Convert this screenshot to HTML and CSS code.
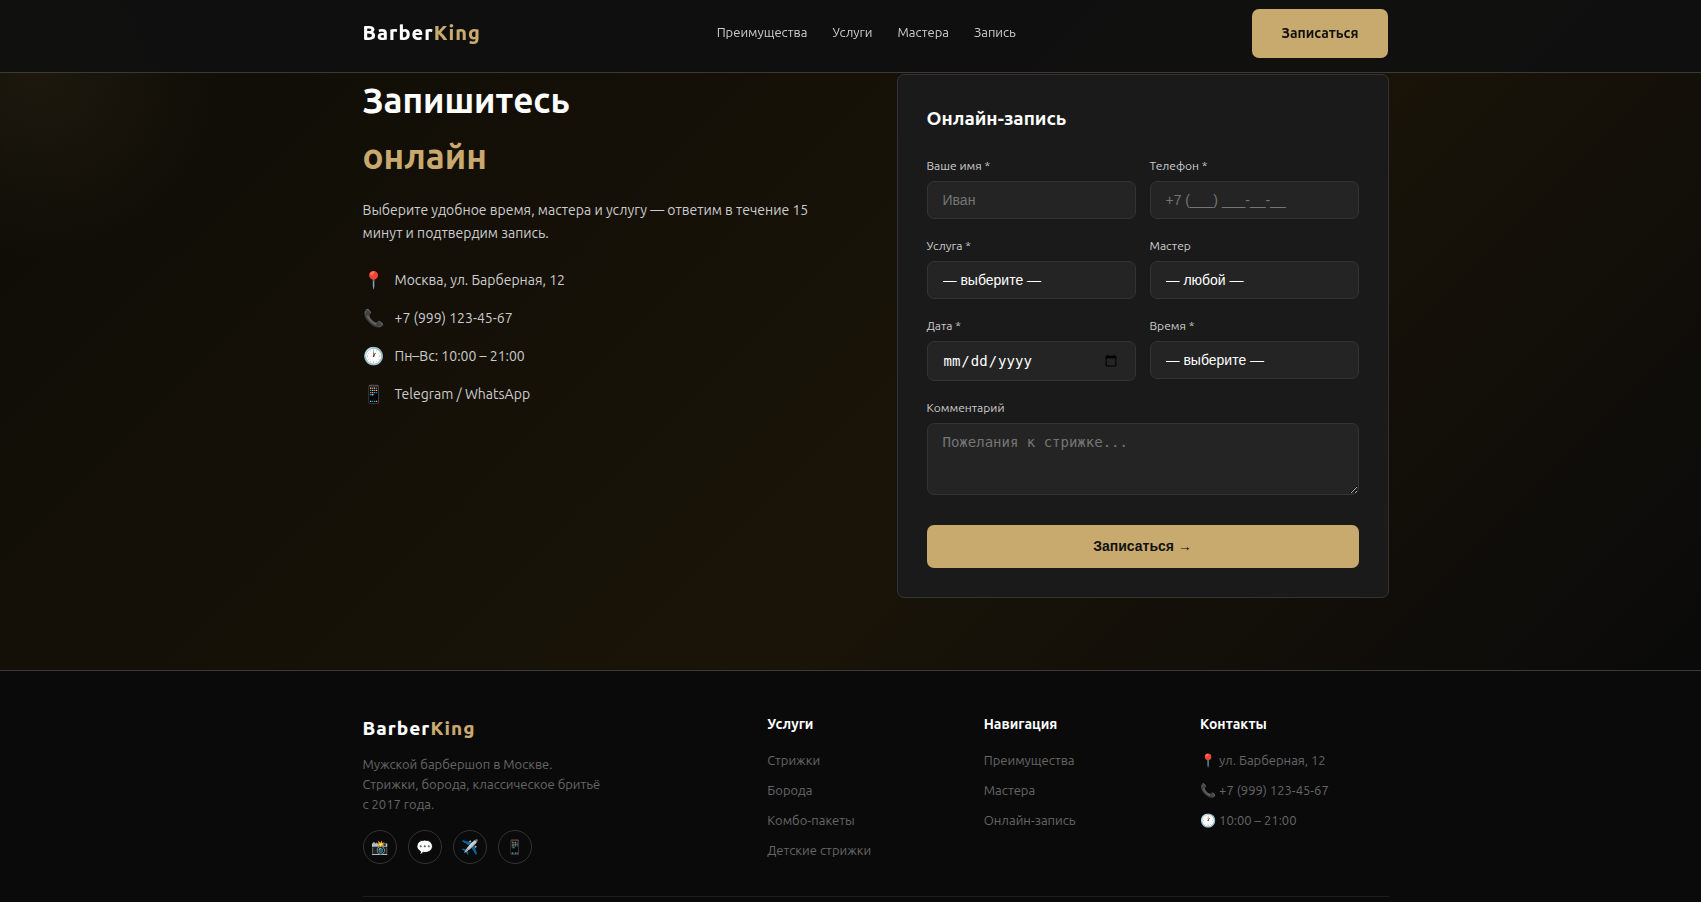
FILE: index.html
```html
<!DOCTYPE html>
<html lang="ru">
<head>
    <meta charset="UTF-8">
    <meta name="viewport" content="width=device-width, initial-scale=1.0">
    <title>BarberKing — онлайн-запись</title>
    <link rel="stylesheet" href="styles.css">
</head>
<body>

<header class="header">
    <div class="container header-inner">
        <a href="#" class="logo">Barber<span>King</span></a>
        <nav class="nav">
            <a href="#features">Преимущества</a>
            <a href="#services">Услуги</a>
            <a href="#masters">Мастера</a>
            <a href="#booking">Запись</a>
        </nav>
        <a href="#booking" class="btn btn-header">Записаться</a>
    </div>
</header>

<section class="booking" id="booking">
    <div class="container booking-grid">
        <div class="booking-info">
            <h2>Запишитесь<br><span>онлайн</span></h2>
            <p>Выберите удобное время, мастера и услугу — ответим в течение 15 минут и подтвердим запись.</p>
            <ul class="contacts">
                <li><span class="icon">📍</span>Москва, ул. Барберная, 12</li>
                <li><span class="icon">📞</span>+7 (999) 123-45-67</li>
                <li><span class="icon">🕐</span>Пн–Вс: 10:00 – 21:00</li>
                <li><span class="icon">📱</span>Telegram / WhatsApp</li>
            </ul>
        </div>

        <form class="card" id="bookingForm">
            <h3>Онлайн-запись</h3>
            <div class="form-grid">
                <div class="field">
                    <label for="name">Ваше имя *</label>
                    <input type="text" id="name" placeholder="Иван" required>
                </div>
                <div class="field">
                    <label for="phone">Телефон *</label>
                    <input type="tel" id="phone" placeholder="+7 (___) ___-__-__" required>
                </div>
                <div class="field">
                    <label for="service">Услуга *</label>
                    <select id="service" required>
                        <option value="">— выберите —</option>
                        <option>Стрижка</option>
                        <option>Борода</option>
                    </select>
                </div>
                <div class="field">
                    <label for="master">Мастер</label>
                    <select id="master">
                        <option value="">— любой —</option>
                    </select>
                </div>
                <div class="field">
                    <label for="date">Дата *</label>
                    <input type="date" id="date" required>
                </div>
                <div class="field">
                    <label for="time">Время *</label>
                    <select id="time" required>
                        <option value="">— выберите —</option>
                        <option>10:00</option>
                        <option>11:00</option>
                    </select>
                </div>
                <div class="field field-wide">
                    <label for="comment">Комментарий</label>
                    <textarea id="comment" placeholder="Пожелания к стрижке..."></textarea>
                </div>
            </div>
            <button type="submit" class="btn btn-submit">Записаться →</button>
        </form>
    </div>
</section>

<footer class="footer">
    <div class="container">
        <div class="footer-grid">
            <div>
                <a href="#" class="logo logo-footer">Barber<span>King</span></a>
                <p>Мужской барбершоп в Москве.<br>Стрижки, борода, классическое бритьё<br>с 2017 года.</p>
                <div class="socials">
                    <a href="#" aria-label="Instagram">📸</a>
                    <a href="#" aria-label="WhatsApp">💬</a>
                    <a href="#" aria-label="Telegram">✈️</a>
                    <a href="#" aria-label="Телефон">📱</a>
                </div>
            </div>
            <div>
                <h4>Услуги</h4>
                <ul>
                    <li><a href="#services">Стрижки</a></li>
                    <li><a href="#services">Борода</a></li>
                    <li><a href="#services">Комбо-пакеты</a></li>
                    <li><a href="#services">Детские стрижки</a></li>
                </ul>
            </div>
            <div>
                <h4>Навигация</h4>
                <ul>
                    <li><a href="#features">Преимущества</a></li>
                    <li><a href="#masters">Мастера</a></li>
                    <li><a href="#booking">Онлайн-запись</a></li>
                </ul>
            </div>
            <div>
                <h4>Контакты</h4>
                <ul>
                    <li><a href="#">📍 ул. Барберная, 12</a></li>
                    <li><a href="tel:+79991234567">📞 +7 (999) 123-45-67</a></li>
                    <li><a href="#">🕐 10:00 – 21:00</a></li>
                </ul>
            </div>
        </div>
    </div>
</footer>

</body>
</html>
```
FILE: styles.css
```css
* {
    box-sizing: border-box;
    margin: 0;
    padding: 0;
}
body {
    font-family: Ubuntu, "Noto Sans", sans-serif;
    font-size: 14px;
    background: #0a0a0a;
    color: #fff;
}
a {
    color: inherit;
    text-decoration: none;
}
ul {
    list-style: none;
}
.container {
    max-width: 1076px;
    margin: 0 auto;
    padding-left: 50px;
}

/* Header */
.header {
    position: fixed;
    top: 0;
    left: 0;
    right: 0;
    z-index: 10;
    padding: 9px 0 14px;
    background: rgba(16, 16, 16, 0.95);
    border-bottom: 1px solid #3a3a3a;
}
.header-inner {
    display: flex;
    align-items: center;
    justify-content: space-between;
}
.logo {
    font-size: 20px;
    font-weight: 800;
    letter-spacing: 1px;
    line-height: 32px;
    padding-bottom: 2px;
}
.logo span {
    color: #c8a96e;
}
.nav {
    display: flex;
    gap: 25px;
    font-size: 13px;
    line-height: 20px;
    padding-bottom: 4px;
    color: #ccc;
}
.btn {
    background: #c8a96e;
    color: #111;
    border: none;
    border-radius: 7px;
    font-size: 14px;
    font-weight: 700;
    cursor: pointer;
}
.btn-header {
    padding: 13px 30px;
    line-height: 23px;
}

/* Booking */
.booking {
    padding: 72px 0;
    background:
        radial-gradient(circle 190px at 34px 66px, rgba(200, 169, 110, 0.08), transparent),
        linear-gradient(135deg, #0e0c06 0%, #1a1408 60%, #0a0a0a 100%);
}
.booking-grid {
    display: grid;
    grid-template-columns: 1fr 1fr;
    gap: 42px;
    align-items: start;
}
.booking-info h2 {
    font-size: 35px;
    font-weight: 700;
    line-height: 56px;
    margin-bottom: 15px;
}
.booking-info h2 span {
    color: #c8a96e;
}
.booking-info p {
    max-width: 460px;
    color: #ccc;
    line-height: 23px;
    margin-bottom: 20px;
}
.contacts {
    display: grid;
    gap: 8px;
    color: #ccc;
}
.contacts li {
    display: flex;
    align-items: center;
    gap: 12px;
    line-height: 30px;
}
.contacts .icon {
    width: 20px;
    font-size: 17px;
    text-align: center;
}
.card {
    margin-top: 2px;
    background: #1a1a1a;
    border: 1px solid #333;
    border-radius: 7px;
    padding: 28px 29px 29px;
}
.card h3 {
    font-size: 19px;
    line-height: 30px;
    margin-bottom: 23px;
}
.form-grid {
    display: grid;
    grid-template-columns: 1fr 1fr;
    gap: 17px 14px;
    align-items: start;
    margin-bottom: 30px;
}
.field {
    display: grid;
    gap: 5px;
}
.field-wide {
    grid-column: 1 / -1;
}
.field label {
    font-size: 12px;
    line-height: 20px;
    color: #ccc;
}
.field input,
.field select,
.field textarea {
    width: 100%;
    padding: 10px 15px;
    background: #242424;
    border: 1px solid #333;
    border-radius: 7px;
    color: #fff;
    font-size: 14px;
    appearance: none;
}
.field textarea {
    display: block;
    height: 72px;
    resize: vertical;
}
.btn-submit {
    width: 100%;
    height: 43px;
    padding-bottom: 2px;
    font-family: "Liberation Sans", Arial, sans-serif;
}

/* Footer */
.footer {
    border-top: 1px solid #3a3a3a;
    padding-top: 41px;
    color: #666;
    font-size: 13px;
}
.footer-grid {
    display: grid;
    grid-template-columns: 2fr 1fr 1fr 1fr;
    gap: 28px;
    padding-bottom: 26px;
    border-bottom: 1px solid #1e1e1e;
}
.logo-footer {
    display: block;
    font-size: 19px;
    color: #fff;
    margin-bottom: 8px;
}
.footer p {
    line-height: 20px;
    margin-bottom: 16px;
}
.socials {
    display: flex;
    gap: 11px;
}
.socials a {
    display: flex;
    align-items: center;
    justify-content: center;
    width: 34px;
    height: 34px;
    border: 1px solid #333;
    border-radius: 50%;
    font-size: 14px;
    color: #fff;
}
.footer h4 {
    font-size: 14px;
    line-height: 24px;
    color: #fff;
    margin-bottom: 14px;
}
.footer li {
    line-height: 20px;
    margin-bottom: 10px;
}
```
